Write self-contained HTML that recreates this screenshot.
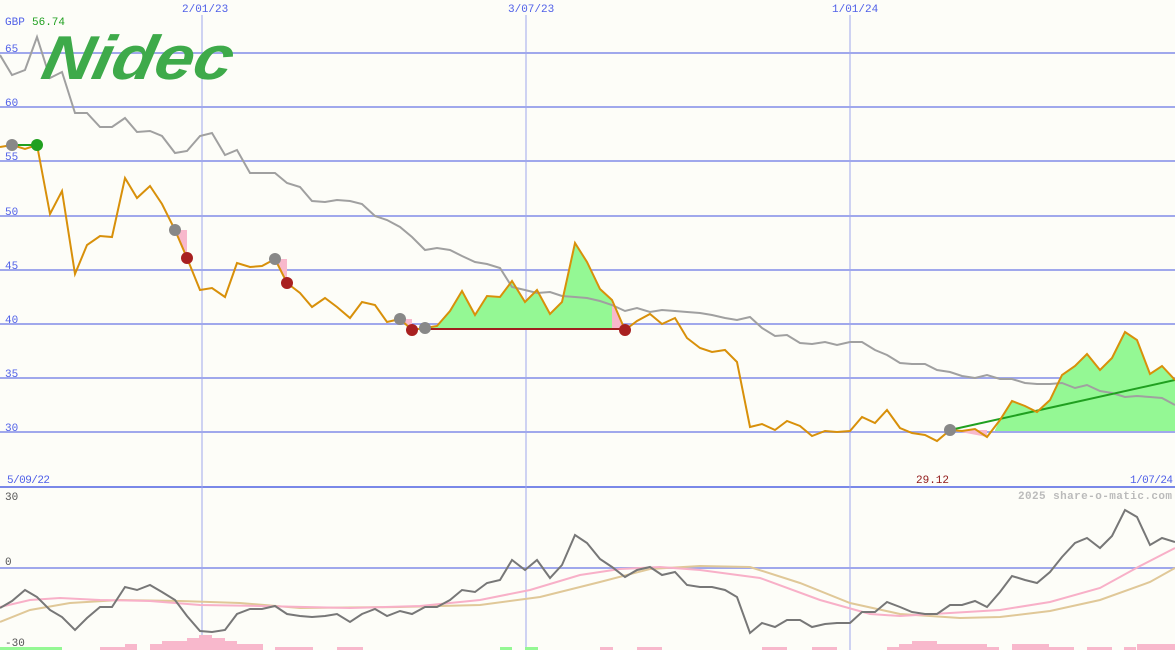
<!DOCTYPE html>
<html><head><meta charset="utf-8"><style>
html,body{margin:0;padding:0;background:#fdfdf8;}
svg{display:block}
text{font-family:"Liberation Mono","DejaVu Sans Mono",monospace;font-size:11px}
</style></head><body>
<svg width="1175" height="650" viewBox="0 0 1175 650" xmlns="http://www.w3.org/2000/svg">
<rect width="1175" height="650" fill="#fdfdf8"/>
<g stroke="#a0a8ec" stroke-width="2">
<line x1="0" y1="53" x2="1175" y2="53"/><line x1="0" y1="107" x2="1175" y2="107"/>
<line x1="0" y1="161" x2="1175" y2="161"/><line x1="0" y1="216" x2="1175" y2="216"/>
<line x1="0" y1="270" x2="1175" y2="270"/><line x1="0" y1="324" x2="1175" y2="324"/>
<line x1="0" y1="378" x2="1175" y2="378"/><line x1="0" y1="432" x2="1175" y2="432"/>
<line x1="0" y1="568" x2="1175" y2="568"/>
</g>
<line x1="0" y1="487" x2="1175" y2="487" stroke="#7a88e8" stroke-width="2"/>
<g stroke="#a0a8ec" stroke-width="1">
<line x1="202" y1="15" x2="202" y2="650"/><line x1="526" y1="15" x2="526" y2="650"/><line x1="850" y1="15" x2="850" y2="650"/>
</g>
<polygon fill="#94f894" points="425,328 437,326 450,311 462,291 475,315 487,296 500,297 512,281 525,302 537,290 550,314 562,302 575,243 587,262 600,289 612,300 618,328"/>
<polygon fill="#94f894" points="995,430 1000,420 1012,401 1025,406 1037,412 1050,400 1062,375 1075,366 1087,354 1100,370 1112,358 1125,332 1137,340 1150,374 1162,366 1175,380 1175,431 995,431"/>
<polygon fill="#f8b8cc" points="612,300 625,330 612,330"/>
<polygon fill="#f8b8cc" points="175,230 187,230 187,258"/>
<polygon fill="#f8b8cc" points="275,259 287,259 287,283"/>
<polygon fill="#f8b8cc" points="400,319 412,319 412,330"/>
<polygon fill="#f8b8cc" points="950,430 987,430 987,437"/>
<polyline fill="none" stroke="#a0a0a0" stroke-width="2" points="0,55 12,75 25,70 37,37 50,78 62,72 75,113 87,113 100,127 112,127 125,118 137,132 150,131 162,136 175,153 187,151 200,136 212,133 225,155 237,150 250,173 262,173 275,173 287,183 300,187 312,201 325,202 337,200 350,201 362,204 375,216 387,220 400,227 412,237 425,250 437,248 450,250 462,256 475,262 487,264 500,268 512,287 525,290 537,293 550,292 562,296 575,297 587,298 600,301 612,305 625,311 637,308 650,312 662,310 675,311 687,312 700,313 712,315 725,318 737,320 750,317 762,328 775,336 787,335 800,343 812,344 825,342 837,345 850,342 862,342 875,350 887,355 900,363 912,364 925,364 937,370 950,372 962,376 975,378 987,375 1000,379 1012,379 1025,383 1037,384 1050,384 1062,383 1075,388 1087,385 1100,391 1112,393 1125,397 1137,396 1150,397 1162,398 1175,405"/>
<line x1="412" y1="329" x2="625" y2="329" stroke="#a02020" stroke-width="2"/>
<line x1="950" y1="430" x2="1175" y2="380" stroke="#20a020" stroke-width="2"/>
<line x1="12" y1="145" x2="37" y2="145" stroke="#20a020" stroke-width="2"/>
<polyline fill="none" stroke="#d8900a" stroke-width="2" points="0,147 12,145 25,149 37,145 50,214 62,191 75,274 87,245 100,236 112,237 125,178 137,198 150,186 162,204 175,230 187,258 200,290 212,288 225,297 237,263 250,267 262,266 275,259 287,283 300,293 312,307 325,298 337,307 350,318 362,302 375,305 387,322 400,319 412,330 425,328 437,326 450,311 462,291 475,315 487,296 500,297 512,281 525,302 537,290 550,314 562,302 575,243 587,262 600,289 612,300 625,330 637,321 650,314 662,324 675,318 687,338 700,348 712,352 725,350 737,362 750,427 762,424 775,430 787,421 800,426 812,436 825,431 837,432 850,431 862,417 875,423 887,410 900,428 912,433 925,435 937,441 950,430 962,431 975,429 987,437 1000,420 1012,401 1025,406 1037,412 1050,400 1062,375 1075,366 1087,354 1100,370 1112,358 1125,332 1137,340 1150,374 1162,366 1175,380"/>
<g fill="#888"><circle cx="12" cy="145" r="6"/><circle cx="175" cy="230" r="6"/><circle cx="275" cy="259" r="6"/><circle cx="400" cy="319" r="6"/><circle cx="425" cy="328" r="6"/><circle cx="950" cy="430" r="6"/></g>
<g fill="#a82020"><circle cx="187" cy="258" r="6"/><circle cx="287" cy="283" r="6"/><circle cx="412" cy="330" r="6"/><circle cx="625" cy="330" r="6"/></g>
<circle cx="37" cy="145" r="6" fill="#20a020"/>
<text x="42" y="79" style="font-family:'Liberation Sans',sans-serif;font-size:62px;font-weight:bold;font-style:italic" fill="#3eaa4a" transform="translate(14,0) skewX(-12)" textLength="190" lengthAdjust="spacingAndGlyphs">Nidec</text>
<text x="5" y="25" fill="#5060e8">GBP</text><text x="32" y="25" fill="#20a020">56.74</text>
<g fill="#5060e8">
<text x="182" y="12">2/01/23</text><text x="508" y="12">3/07/23</text><text x="832" y="12">1/01/24</text>
<text x="5" y="52">65</text><text x="5" y="106">60</text><text x="5" y="160">55</text><text x="5" y="215">50</text>
<text x="5" y="269">45</text><text x="5" y="323">40</text><text x="5" y="377">35</text><text x="5" y="431">30</text>
<text x="7" y="483" textLength="43">5/09/22</text><text x="1130" y="483" textLength="43">1/07/24</text>
</g>
<text x="916" y="483" fill="#901818">29.12</text>
<text x="1018" y="499" fill="#bbbbbb" style="font-weight:bold" textLength="154">2025 share-o-matic.com</text>
<g fill="#555"><text x="5" y="500">30</text><text x="5" y="565">0</text><text x="5" y="646">-30</text></g>
<g fill="#f8b8cc">
<rect x="100" y="647" width="25" height="3"/><rect x="125" y="644" width="12" height="6"/><rect x="150" y="644" width="12" height="6"/><rect x="162" y="641" width="25" height="9"/><rect x="187" y="638" width="12" height="12"/><rect x="199" y="635" width="13" height="15"/><rect x="212" y="638" width="13" height="12"/><rect x="225" y="641" width="12" height="9"/><rect x="237" y="644" width="26" height="6"/>
<rect x="275" y="647" width="38" height="3"/><rect x="337" y="647" width="26" height="3"/>
<rect x="887" y="647" width="12" height="3"/><rect x="899" y="644" width="13" height="6"/><rect x="912" y="641" width="25" height="9"/><rect x="937" y="644" width="50" height="6"/><rect x="987" y="647" width="12" height="3"/><rect x="1012" y="644" width="37" height="6"/><rect x="1049" y="647" width="25" height="3"/><rect x="1087" y="647" width="25" height="3"/><rect x="1124" y="647" width="12" height="3"/><rect x="1137" y="644" width="38" height="6"/>
<rect x="600" y="647" width="13" height="3"/><rect x="637" y="647" width="25" height="3"/><rect x="762" y="647" width="25" height="3"/><rect x="812" y="647" width="25" height="3"/>
</g>
<g fill="#94f894"><rect x="0" y="647" width="62" height="3"/><rect x="500" y="647" width="12" height="3"/><rect x="525" y="647" width="13" height="3"/></g>
<polyline fill="none" stroke="#e0c898" stroke-width="2" points="0,622 30,610 70,603 120,600 180,601 240,603 300,608 400,607 480,605 540,597 600,582 650,569 700,566 750,567 800,583 850,603 900,614 960,618 1000,617 1050,611 1100,600 1150,582 1175,568"/>
<polyline fill="none" stroke="#f8b0c8" stroke-width="2" points="0,607 30,600 60,598 100,600 150,601 200,605 260,606 350,608 420,606 480,600 530,590 580,575 620,569 660,567 700,570 760,578 820,600 870,614 900,616 950,613 1000,610 1050,602 1100,588 1140,566 1175,548"/>
<polyline fill="none" stroke="#777" stroke-width="2" points="0,608 12,601 25,590 37,597 50,610 62,617 75,630 87,618 100,607 112,607 125,587 137,590 150,585 162,592 175,600 187,616 200,631 212,632 225,630 237,614 250,609 262,609 275,606 287,614 300,616 312,617 325,616 337,614 350,622 362,614 375,609 387,616 400,611 412,614 425,607 437,607 450,600 462,590 475,592 487,583 500,580 512,560 525,570 537,560 550,578 562,565 575,535 587,543 600,559 612,567 625,577 637,570 650,567 662,575 675,572 687,585 700,587 712,587 725,590 737,597 750,633 762,623 775,627 787,620 800,620 812,627 825,624 837,623 850,623 862,612 875,612 887,602 900,607 912,612 925,614 937,614 950,605 962,605 975,601 987,607 1000,592 1012,576 1025,580 1037,583 1050,572 1062,557 1075,543 1087,538 1100,548 1112,536 1125,510 1137,517 1150,545 1162,538 1175,542"/>
</svg>
</body></html>
